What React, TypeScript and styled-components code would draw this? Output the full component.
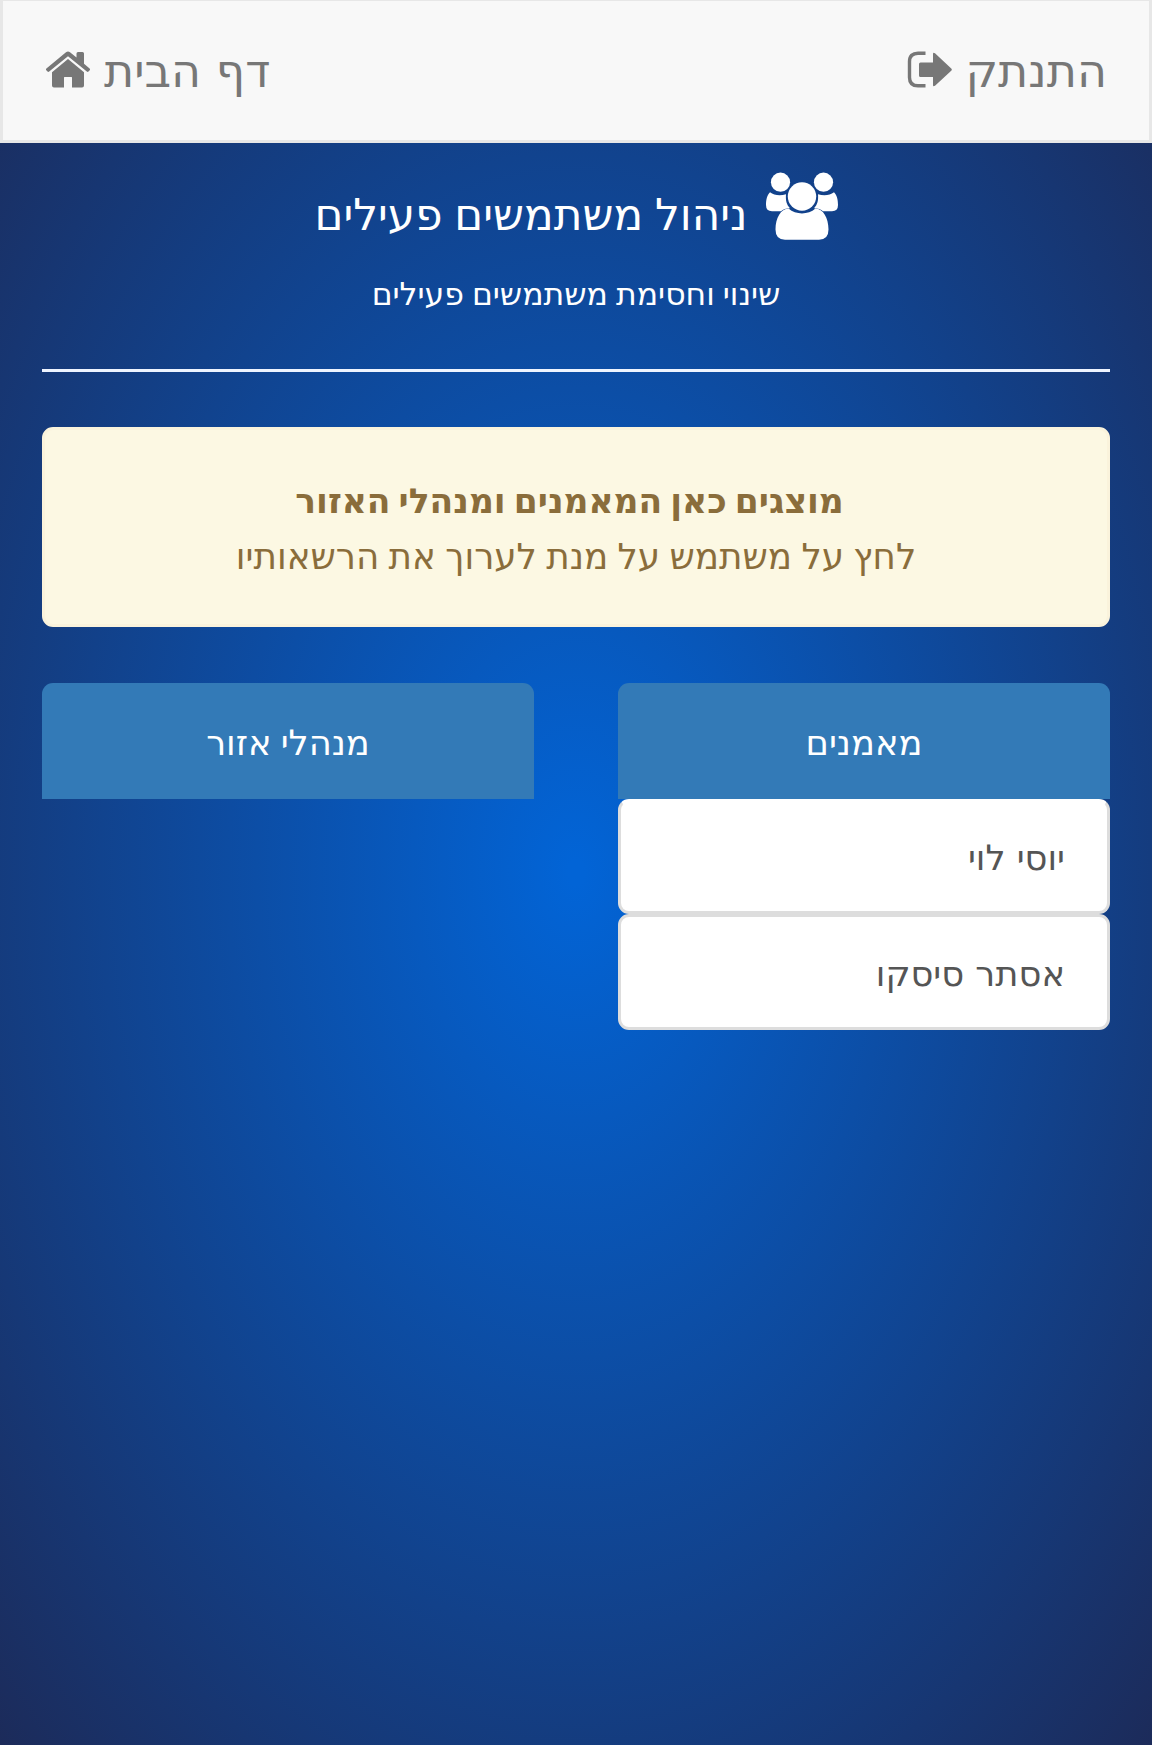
import React from "react";
import styled, { createGlobalStyle } from "styled-components";

const GlobalStyle = createGlobalStyle`
  * { box-sizing: border-box; }
  body {
    margin: 0;
    font-family: "DejaVu Sans", "Open Sans", sans-serif;
    color: #fff;
    word-spacing: -2px;
  }
`;

const Page = styled.div`
  direction: rtl;
  min-height: 1745px;
  background: radial-gradient(ellipse farthest-corner at center, #0264d6 1%, #1c2b5a 100%);
`;

const Navbar = styled.nav`
  display: flex;
  justify-content: space-between;
  height: 143px;
  padding: 0 42px;
  background: #f8f8f8;
  border: 3px solid #e7e7e7;
  border-top-width: 1px;
`;

const NavLink = styled.a<{ $gap: number }>`
  display: flex;
  gap: ${(p) => p.$gap}px;
  padding-top: 50px;
  color: #777;
  font-size: 46px;
  line-height: 40px;
  text-decoration: none;
  white-space: nowrap;
  word-spacing: 0;
`;

const NavIcon = styled.svg`
  display: block;
  fill: currentColor;
`;

const Content = styled.main`
  padding: 0 42px;
`;

const Heading = styled.header`
  height: 229px;
  border-bottom: 3px solid #eef4ff;
  text-align: center;
`;

const Title = styled.h1`
  display: flex;
  justify-content: center;
  gap: 18px;
  margin: 0;
  padding-top: 29px;
  font-size: 43.7px;
  font-weight: 400;
  line-height: 86px;
  height: 116px;
  white-space: nowrap;
`;

const Subtitle = styled.p`
  margin: 0;
  font-size: 31.5px;
  line-height: 71px;
`;

const Alert = styled.section`
  height: 200px;
  margin: 55px 0 56px;
  padding-top: 43px;
  background: #fcf8e3;
  border: 3px solid #faf3dc;
  border-radius: 11px;
  color: #8a6d3b;
  font-size: 35.7px;
  line-height: 56px;
  text-align: center;
`;

const AlertLead = styled.strong`
  display: block;
  padding-right: 13px;
  font-size: 34.5px;
  word-spacing: -4px;
`;

const AlertText = styled.div``;

const Columns = styled.div`
  display: grid;
  grid-template-columns: 1fr 1fr;
  gap: 84px;
`;

const PanelTitle = styled.h2`
  margin: 0;
  height: 116px;
  padding-top: 2px;
  background: #337ab7;
  border-radius: 11px 11px 0 0;
  font-size: 35.3px;
  font-weight: 400;
  line-height: 116px;
  text-align: center;
`;

const UserItem = styled.button`
  display: block;
  width: 100%;
  height: 116px;
  padding: 2px 42px 0;
  background: #fff;
  border: 3px solid #ddd;
  border-radius: 11px;
  color: #555;
  font-family: inherit;
  font-size: 35.3px;
  line-height: 109px;
  text-align: right;
  word-spacing: 0;

  &:first-child {
    height: 115px;
    padding-top: 1px;
    border-top-color: #fff;
  }
`;

const HomeIcon = () => (
  <NavIcon width="46" height="38" viewBox="0 0 46 38">
    <path d="M21 1.2Q23 -.2 25 1.2L31.5 6.6V2.5Q31.5 1 33 1H37.5Q39 1 39 2.5V12.8L44.6 17.5Q45.5 18.3 44.7 19.2L43.5 20.6Q42.7 21.3 41.8 20.6L23 5.2L4.2 20.6Q3.3 21.3 2.5 20.6L1.3 19.2Q.5 18.3 1.4 17.5Z" />
    <path d="M23 8L39 21.2V34.5Q39 36.5 37 36.5H27V26.5Q27 26 26.5 26H19.5Q19 26 19 26.5V36.5H9Q7 36.5 7 34.5V21.2Z" />
  </NavIcon>
);

const LogoutIcon = () => (
  <NavIcon width="46" height="38" viewBox="0 0 46 38">
    <path d="M18.5 2.2H11Q2.5 2.2 2.5 10.5V26.5Q2.5 34.8 11 34.8H18.5" fill="none" stroke="currentColor" strokeWidth="3.4" />
    <path d="M13.5 11.5H26V3Q26 1 28 2.3L44.5 17.8Q45.2 18.6 44.5 19.4L28 34.8Q26 36 26 34V26H13.5Q12 26 12 24.5V13Q12 11.5 13.5 11.5Z" />
  </NavIcon>
);

const UsersIcon = () => (
  <svg width="72" height="68" viewBox="0 0 72 68" fill="#fff">
    <circle cx="14.5" cy="10.2" r="9.6" />
    <circle cx="57.5" cy="10.2" r="9.6" />
    <path d="M4 20.2C8 23.5 14.5 24 20 22.2C19.5 28.5 20.5 32.5 24 36.2C20 36.2 17 37.5 15 39.2H6Q0 39.2 0 33C0 28 1 23 4 20.2Z" />
    <path d="M68 20.2C64 23.5 57.5 24 52 22.2C52.5 28.5 51.5 32.5 48 36.2C52 36.2 55 37.5 57 39.2H66Q72 39.2 72 33C72 28 71 23 68 20.2Z" />
    <circle cx="36" cy="24.5" r="14.2" />
    <path d="M22.5 36.5C30 43 42 43 49.5 36.5C57 36.5 62.5 46 62.5 57.5Q62.5 67.7 53 67.7H19Q9.5 67.7 9.5 57.5C9.5 46 15 36.5 22.5 36.5Z" />
  </svg>
);

const trainers = ["יוסי לוי", "אסתר סיסקו"];

export default function App() {
  return (
    <Page dir="rtl" lang="he">
      <GlobalStyle />
      <Navbar>
        <NavLink $gap={12}>
          <span>התנתק</span>
          <LogoutIcon />
        </NavLink>
        <NavLink $gap={13}>
          <span>דף הבית</span>
          <HomeIcon />
        </NavLink>
      </Navbar>
      <Content>
        <Heading>
          <Title>
            <UsersIcon />
            <span>ניהול משתמשים פעילים</span>
          </Title>
          <Subtitle>שינוי וחסימת משתמשים פעילים</Subtitle>
        </Heading>
        <Alert>
          <AlertLead>מוצגים כאן המאמנים ומנהלי האזור</AlertLead>
          <AlertText>לחץ על משתמש על מנת לערוך את הרשאותיו</AlertText>
        </Alert>
        <Columns>
          <section>
            <PanelTitle>מאמנים</PanelTitle>
            <div>
              {trainers.map((name) => (
                <UserItem key={name}>{name}</UserItem>
              ))}
            </div>
          </section>
          <section>
            <PanelTitle>מנהלי אזור</PanelTitle>
          </section>
        </Columns>
      </Content>
    </Page>
  );
}
